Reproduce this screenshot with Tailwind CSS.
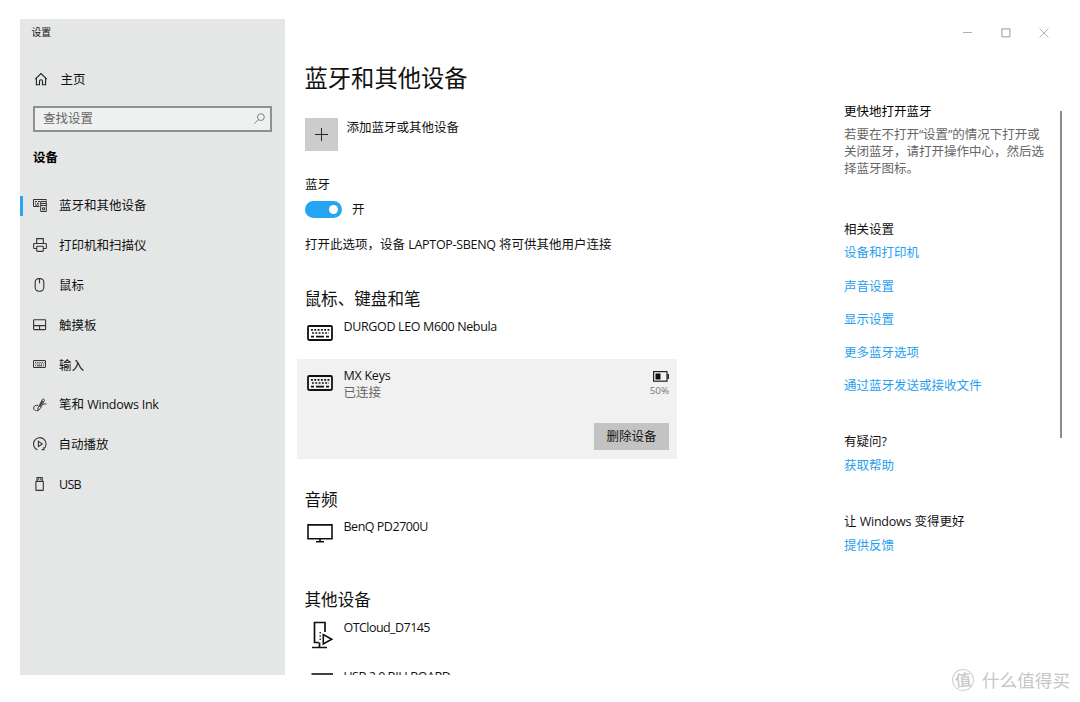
<!DOCTYPE html>
<html lang="zh-CN">
<head>
    <meta charset="UTF-8">
    <meta name="viewport" content="width=device-width, initial-scale=1.0">
    <title>设置</title>
    <script src="https://cdn.jsdelivr.net/npm/@tailwindcss/browser@4"></script>
    <style>
        body { font-family: 'Open Sans', 'Noto Sans CJK SC', sans-serif; }
    </style>
</head>
<body class="bg-white text-[#111] text-[12.5px] leading-5">
    <div class="relative w-[1080px] h-[702px] overflow-hidden pl-5 pt-[19px]">
        <div class="flex h-[656px] overflow-hidden">

            <!-- Sidebar -->
            <aside class="w-[265px] shrink-0 bg-[#e5e6e6]">
                <div class="pl-[11.5px] pt-1 text-[9.8px]">设置</div>
                <a class="flex items-center mt-[26px] h-5 pl-[14px]">
                    <svg class="w-[14px] h-[14px]" viewBox="0 0 14 14" fill="none" stroke="#222" stroke-width="1.1">
                        <path d="M1.2 7.2 7 1.6 12.8 7.2M2.4 6.2v6.5h3.1V9.2c0-2 3-2 3 0v3.5h3.1V6.2" />
                    </svg>
                    <span class="ml-[12.5px] pt-0.5">主页</span>
                </a>
                <div class="flex items-center justify-between mt-[17px] ml-[13px] w-[239px] h-[26px] border-2 border-[#8f9191] bg-[#eff0f0] pl-2 pr-[5px] text-[#666]">
                    <span>查找设置</span>
                    <svg class="w-[11px] h-[11px] -mt-0.5" viewBox="0 0 11 11" fill="none" stroke="#808080" stroke-width="1">
                        <circle cx="6.9" cy="4.1" r="3.4" />
                        <path d="M4.5 6.5.5 10.5" />
                    </svg>
                </div>
                <div class="mt-[16px] ml-[13px] font-bold text-black">设备</div>

                <nav class="mt-[17.5px]">
                    <a class="relative flex items-center h-[39.85px] pl-[13px]">
                        <span class="absolute left-0 top-[10px] w-[3px] h-5 bg-[#26a5f3]"></span>
                        <svg class="w-[14px] h-[14px]" viewBox="0 0 14 14" fill="none" stroke="#333" stroke-width="1">
                            <path d="M6.5 8.5h-6v-7h12.8v1M2 3.5h2M5 3.5h2M2 5.3h1M4 5.3h2M2 7h4" />
                            <path d="M7.7 3.5h5.6v10H7.7zM7.7 5.5h5.5M7.7 7.5h5.5" />
                            <path d="M9.6 9.8h2v2h-2z" />
                        </svg>
                        <span class="ml-[12px] pt-0.5">蓝牙和其他设备</span>
                    </a>
                    <a class="flex items-center h-[39.85px] pl-[13px]">
                        <svg class="w-[14px] h-[14px]" viewBox="0 0 14 14" fill="none" stroke="#333" stroke-width="1.1">
                            <path d="M3.7 5.5V.6h6.6v4.9M3.7 10.5H1.4a.8.8 0 0 1-.8-.8V6.3c0-.5.3-.8.8-.8h11.2c.5 0 .8.3.8.8v3.4c0 .5-.3.8-.8.8h-2.3" />
                            <rect x="3.7" y="8.2" width="6.6" height="5.2" rx=".8" />
                        </svg>
                        <span class="ml-[12px] pt-0.5">打印机和扫描仪</span>
                    </a>
                    <a class="flex items-center h-[39.85px] pl-[13px]">
                        <svg class="w-[14px] h-[14px]" viewBox="0 0 14 14" fill="none" stroke="#333" stroke-width="1.1">
                            <rect x="2.2" y=".6" width="8.6" height="12.6" rx="3.6" />
                            <path d="M6.5 1v4.4" />
                        </svg>
                        <span class="ml-[12px] pt-0.5">鼠标</span>
                    </a>
                    <a class="flex items-center h-[39.85px] pl-[13px]">
                        <svg class="w-[14px] h-[14px]" viewBox="0 0 14 14" fill="none" stroke="#333" stroke-width="1.1">
                            <rect x=".6" y="1.8" width="12" height="9.8" rx=".6" />
                            <path d="M.6 7.6h12M6.6 7.6v3.8" />
                        </svg>
                        <span class="ml-[12px] pt-0.5">触摸板</span>
                    </a>
                    <a class="flex items-center h-[39.85px] pl-[13px]">
                        <svg class="w-[14px] h-[14px]" viewBox="0 0 14 14" fill="none" stroke="#333" stroke-width="1">
                            <rect x=".5" y="2.5" width="12" height="7" rx=".3" />
                            <path d="M2 4.4h9.5M2.6 6h8.5" stroke-dasharray="1 .8" />
                            <path d="M2 7.8h1M4 7.8h5M10 7.8h1" />
                        </svg>
                        <span class="ml-[12px] pt-0.5">输入</span>
                    </a>
                    <a class="flex items-center h-[39.85px] pl-[13px]">
                        <svg class="w-[14px] h-[14px]" viewBox="0 0 14 14" fill="none" stroke="#333" stroke-width="1">
                            <path d="M4.6 13 5.2 9.6 9.4 1.5c.6-1.1 2.5-.2 2 1L7.2 10.6z" />
                            <path d="M9.6 3 6.6 8.8" stroke-width="1.3" />
                            <path d="M5 7.3C2.4 6.9.6 8.3.6 10.1c0 1.7 1.5 2.6 3 2.4M9.8 6.8c1.4-.9 2.2-1.3 3.7-.7" />
                        </svg>
                        <span class="ml-[12px] pt-px">笔和 <span class="tracking-[-0.25px]">Windows Ink</span></span>
                    </a>
                    <a class="flex items-center h-[39.85px] pl-[13px]">
                        <svg class="w-[14px] h-[14px]" viewBox="0 0 14 14" fill="none" stroke="#333" stroke-width="1.1">
                            <path d="M4.4 12.8A6.3 6.3 0 1 1 10.6 12M8.6 12.6h2.2v-2.4" />
                            <path d="M5.4 4.3v5.2L9.3 6.9z" />
                        </svg>
                        <span class="ml-[11.5px] pt-0.5">自动播放</span>
                    </a>
                    <a class="flex items-center h-[39.85px] pl-[13px]">
                        <svg class="w-[14px] h-[14px]" viewBox="0 0 14 14" fill="none" stroke="#333" stroke-width="1.1">
                            <path d="M4 4.4V.6h5.2v3.8M5 2.4h1M7.2 2.4h1" />
                            <rect x="2.9" y="4.4" width="7.4" height="9" rx=".4" />
                        </svg>
                        <span class="ml-[12px] pt-0.5 tracking-[-0.7px]">USB</span>
                    </a>
                </nav>
            </aside>

            <!-- Device list -->
            <main class="w-[392.5px] shrink-0 pl-5">
                <h1 class="mt-[43px] -ml-[0.5px] text-[23.3px] leading-8">蓝牙和其他设备</h1>
                <div class="flex mt-[24px]">
                    <div class="flex items-center justify-center w-[33px] h-[33px] bg-[#ccc]">
                        <svg class="w-[13px] h-[13px]" viewBox="0 0 13 13" stroke="#222" stroke-width="1"><path d="M6.5 0v13M0 6.5h13" /></svg>
                    </div>
                    <div class="ml-[8.5px]">添加蓝牙或其他设备</div>
                </div>

                <div class="mt-[24px]">蓝牙</div>
                <div class="flex items-center mt-[4px] h-5">
                    <div class="flex items-center justify-end w-[37px] h-[17px] rounded-full bg-[#26a5f3] pr-1">
                        <div class="w-[9px] h-[9px] rounded-full bg-white"></div>
                    </div>
                    <span class="ml-[10px] pt-0.5">开</span>
                </div>
                <div class="mt-[15.5px] whitespace-nowrap">打开此选项，设备 <span class="tracking-[-0.3px]">LAPTOP-SBENQ</span> 将可供其他用户连接</div>

                <h2 class="mt-[32.5px] -ml-[0.5px] text-[16.6px] leading-6">鼠标、键盘和笔</h2>
                <div class="flex mt-[5px] h-[43px]">
                    <svg class="w-[26px] h-4 ml-[1.5px] mt-[9px]" viewBox="0 0 26 16" fill="none" stroke="#111">
                        <rect x="1" y="1" width="24" height="14" rx="1.2" stroke-width="1.8" />
                        <path d="M4 4.8h19M5 8h17" stroke-width="1.7" stroke-dasharray="1.9 1.4" />
                        <path d="M4 11.6h3M9 11.6h8M19 11.6h3" stroke-width="1.6" />
                    </svg>
                    <span class="ml-[11px] mt-px tracking-[-0.36px]">DURGOD LEO M600 Nebula</span>
                </div>

                <div class="-ml-[8px] w-[380px] h-[100px] bg-[#f1f1f1] pl-[9.5px] pr-2 pt-[7px]">
                    <div class="flex">
                        <svg class="w-[26px] h-4 mt-[9px]" viewBox="0 0 26 16" fill="none" stroke="#111">
                            <rect x="1" y="1" width="24" height="14" rx="1.2" stroke-width="1.8" />
                            <path d="M4 4.8h19M5 8h17" stroke-width="1.7" stroke-dasharray="1.9 1.4" />
                            <path d="M4 11.6h3M9 11.6h8M19 11.6h3" stroke-width="1.6" />
                        </svg>
                        <div class="ml-[11px] leading-[17px] pt-[1px]">
                            <div class="tracking-[-0.25px]">MX Keys</div>
                            <div class="text-[#666]">已连接</div>
                        </div>
                        <div class="ml-auto flex flex-col items-end pt-[5px]">
                            <svg class="w-4 h-[11px]" viewBox="0 0 16 11" fill="none" stroke="#222" stroke-width="1.2">
                                <rect x=".6" y=".6" width="13.4" height="9.6" />
                                <path d="M15.2 3v5" stroke-width="1.5" />
                                <path d="M2.5 2.5h5v6h-5z" fill="#111" stroke="none" />
                            </svg>
                            <span class="text-[9.8px] leading-3 mt-[3px] text-[#777]">50%</span>
                        </div>
                    </div>
                    <button class="block ml-auto mt-[21.5px] w-[75px] h-[27px] bg-[#c3c3c3] pt-0.5">删除设备</button>
                </div>

                <h2 class="mt-[28.5px] -ml-[0.5px] text-[16.6px] leading-6">音频</h2>
                <div class="flex mt-[4.5px] h-[72px]">
                    <svg class="w-[26px] h-[19px] ml-[1.5px] mt-[8px]" viewBox="0 0 26 19" fill="none" stroke="#111" stroke-width="1.6">
                        <path d="M1 .9h24v13.8H1zM13 14.7V18M9 17.8h8" />
                    </svg>
                    <span class="ml-[11px] mt-px tracking-[-0.48px]">BenQ PD2700U</span>
                </div>

                <h2 class="-ml-[0.5px] text-[16.6px] leading-6">其他设备</h2>
                <div class="flex mt-[5px] h-[49px]">
                    <svg class="w-[26px] h-[28px] ml-[1.5px] mt-[4px]" viewBox="0 0 26 28" fill="none" stroke="#111" stroke-width="1.7">
                        <path d="M18 11V1.5H7.5v20H12M5 26.5h15M12.5 21.5v5" />
                        <path d="M16.3 13.5v9.4l8.4-4.7z" stroke-width="1.6" />
                        <path d="M13.2 11v8" stroke-width="1.3" stroke-dasharray="1.5 1.7" />
                    </svg>
                    <span class="ml-[11px] mt-px tracking-[-0.55px]">OTCloud_D7145</span>
                </div>
                <div class="flex">
                    <svg class="w-[26px] h-4 ml-[1.5px] mt-[7px]" viewBox="0 0 26 16" fill="none" stroke="#111" stroke-width="1.6">
                        <path d="M4.5 1h22" />
                    </svg>
                    <span class="ml-[11px] mt-px tracking-[-0.5px]">USB 2.0 BILLBOARD</span>
                </div>
            </main>

            <!-- Related links -->
            <section class="ml-[166.5px] w-[218px] shrink-0">
                <div class="flex items-center ml-[118.5px] mt-[8px] h-3 gap-[28px]">
                    <svg class="w-[10px] h-[10px] shrink-0" viewBox="0 0 10 10" stroke="#b0b0b0" stroke-width="1"><path d="M0 4.5h9" /></svg>
                    <svg class="w-[10px] h-[10px] shrink-0" viewBox="0 0 10 10" fill="none" stroke="#999" stroke-width="1"><path d="M.9 .9h8v8h-8z" /></svg>
                    <svg class="w-[10px] h-[10px] shrink-0" viewBox="0 0 10 10" stroke="#aaa" stroke-width=".9"><path d="M.5.5l9 9M9.5.5l-9 9" /></svg>
                </div>
                <div class="flex mt-[63px] whitespace-nowrap">
                    <div class="w-[216px]">
                        <div class="text-black">更快地打开蓝牙</div>
                        <p class="mt-[5px] leading-[16.8px] text-[#666]">若要在不打开<span class="tracking-[-0.3px]">“</span>设置<span class="tracking-[-0.3px]">”</span>的情况下打开或<br>关闭蓝牙，请打开操作中心，然后选<br>择蓝牙图标。</p>
                        <div class="mt-[43px]">相关设置</div>
                        <div class="flex flex-col gap-[13.2px] mt-[3px] text-[#26a0ee]">
                            <a>设备和打印机</a>
                            <a>声音设置</a>
                            <a>显示设置</a>
                            <a>更多蓝牙选项</a>
                            <a>通过蓝牙发送或接收文件</a>
                        </div>
                        <div class="mt-[36px]">有疑问?</div>
                        <a class="block mt-[4px] text-[#26a0ee]">获取帮助</a>
                        <div class="mt-[36px]">让 <span class="tracking-[-0.25px]">Windows</span> 变得更好</div>
                        <a class="block mt-[4px] text-[#26a0ee]">提供反馈</a>
                    </div>
                    <div class="w-[2px] h-[327px] mt-[9px] shrink-0 bg-[#8c8c8c]"></div>
                </div>
            </section>
        </div>

        <!-- Watermark -->
        <div class="absolute left-[952px] top-[668px] flex items-center h-6 text-[#c6c6c6] whitespace-nowrap">
            <div class="flex items-center justify-center w-[22px] h-[22px] rounded-full border border-[#d0d0d0] text-[16px] font-medium -rotate-6">值</div>
            <span class="ml-[8px] text-[17.6px]">什么值得买</span>
        </div>
    </div>
</body>
</html>
